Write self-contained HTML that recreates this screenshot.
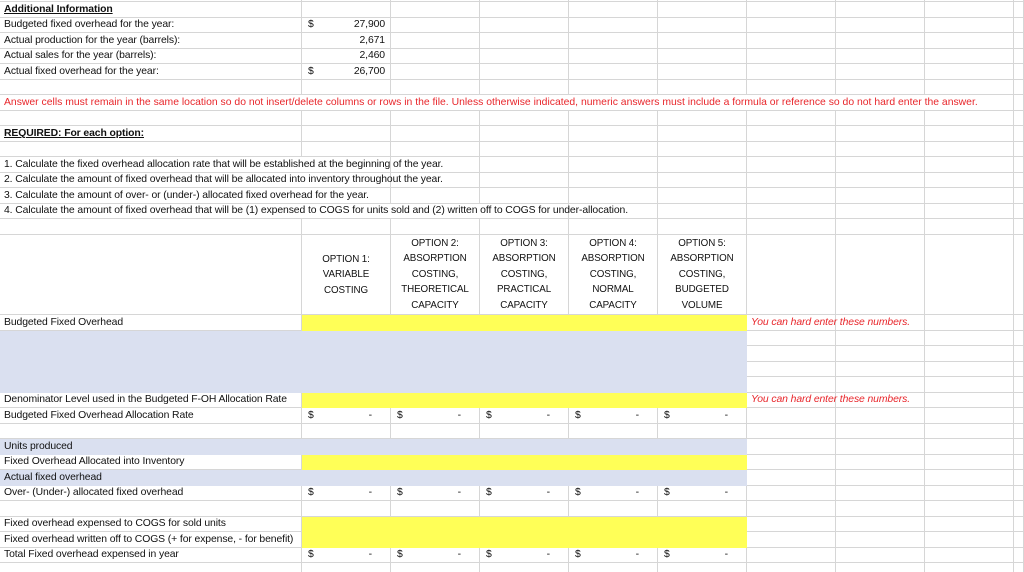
<!DOCTYPE html>
<html><head><meta charset="utf-8">
<style>
html,body{margin:0;padding:0;background:#fff;width:1024px;height:572px;overflow:hidden}
table{width:1024px;border-collapse:separate;border-spacing:0;table-layout:fixed;font-family:"Liberation Sans",Carlito,sans-serif;font-size:10.4px;color:#111;letter-spacing:-0.1px}
td{padding:0 0 1px 4px;border-right:1px solid #d6d6d6;border-bottom:1px solid #d6d6d6;white-space:nowrap;overflow:visible;vertical-align:bottom;box-sizing:border-box;line-height:12px}
.y{background:#ffff57;border-color:#ffff57}
.b{background:#dae0f0;border-color:#dae0f0}
.red{color:#e8262b}
.it{font-style:italic;color:#e8262b}
.bu{font-weight:bold;text-decoration:underline}
.r{text-align:right;padding-right:5px}
.d{position:relative}
.d span.s{position:absolute;left:6px;bottom:1px}
.d span.m{position:absolute;right:18px;bottom:1px}
.h{text-align:center;vertical-align:bottom;line-height:15.4px;padding:0 0 1px 0;white-space:nowrap;font-size:9.8px}
</style></head><body>
<table>
<colgroup><col style="width:302px"><col style="width:89px"><col style="width:89px"><col style="width:89px"><col style="width:89px"><col style="width:89px"><col style="width:89px"><col style="width:89px"><col style="width:89px"><col style="width:10px"></colgroup>
<tr style="height:2px"><td></td><td></td><td></td><td></td><td></td><td></td><td></td><td></td><td></td><td></td></tr>
<tr style="height:16px"><td class="bu">Additional Information</td><td></td><td></td><td></td><td></td><td></td><td></td><td></td><td></td><td></td></tr>
<tr style="height:15px"><td>Budgeted fixed overhead for the year:</td><td class="d"><span class="s">$</span><span class="m" style="right:5px">27,900</span></td><td></td><td></td><td></td><td></td><td></td><td></td><td></td><td></td></tr>
<tr style="height:16px"><td>Actual production for the year (barrels):</td><td class="r">2,671</td><td></td><td></td><td></td><td></td><td></td><td></td><td></td><td></td></tr>
<tr style="height:15px"><td>Actual sales for the year (barrels):</td><td class="r">2,460</td><td></td><td></td><td></td><td></td><td></td><td></td><td></td><td></td></tr>
<tr style="height:16px"><td>Actual fixed overhead for the year:</td><td class="d"><span class="s">$</span><span class="m" style="right:5px">26,700</span></td><td></td><td></td><td></td><td></td><td></td><td></td><td></td><td></td></tr>
<tr style="height:15px"><td></td><td></td><td></td><td></td><td></td><td></td><td></td><td></td><td></td><td></td></tr>
<tr style="height:16px"><td colspan="9" class="red" style="letter-spacing:0px">Answer cells must remain in the same location so do not insert/delete columns or rows in the file. Unless otherwise indicated, numeric answers must include a formula or reference so do not hard enter the answer.</td><td></td></tr>
<tr style="height:15px"><td></td><td></td><td></td><td></td><td></td><td></td><td></td><td></td><td></td><td></td></tr>
<tr style="height:16px"><td class="bu">REQUIRED: For each option:</td><td></td><td></td><td></td><td></td><td></td><td></td><td></td><td></td><td></td></tr>
<tr style="height:15px"><td></td><td></td><td></td><td></td><td></td><td></td><td></td><td></td><td></td><td></td></tr>
<tr style="height:16px"><td colspan="2">1. Calculate the fixed overhead allocation rate that will be established at the beginning of the year.</td><td></td><td></td><td></td><td></td><td></td><td></td><td></td><td></td></tr>
<tr style="height:15px"><td colspan="2">2. Calculate the amount of fixed overhead that will be allocated into inventory throughout the year.</td><td></td><td></td><td></td><td></td><td></td><td></td><td></td><td></td></tr>
<tr style="height:16px"><td colspan="2">3. Calculate the amount of over- or (under-) allocated fixed overhead for the year.</td><td></td><td></td><td></td><td></td><td></td><td></td><td></td><td></td></tr>
<tr style="height:15px"><td colspan="4">4. Calculate the amount of fixed overhead that will be (1) expensed to COGS for units sold and (2) written off to COGS for under-allocation.</td><td></td><td></td><td></td><td></td><td></td><td></td></tr>
<tr style="height:16px"><td></td><td></td><td></td><td></td><td></td><td></td><td></td><td></td><td></td><td></td></tr>
<tr style="height:80px"><td></td><td class="h" style="padding-bottom:16px">OPTION 1:<br>VARIABLE<br>COSTING</td><td class="h">OPTION 2:<br>ABSORPTION<br>COSTING,<br>THEORETICAL<br>CAPACITY</td><td class="h">OPTION 3:<br>ABSORPTION<br>COSTING,<br>PRACTICAL<br>CAPACITY</td><td class="h">OPTION 4:<br>ABSORPTION<br>COSTING,<br>NORMAL<br>CAPACITY</td><td class="h">OPTION 5:<br>ABSORPTION<br>COSTING,<br>BUDGETED<br>VOLUME</td><td></td><td></td><td></td><td></td></tr>
<tr style="height:16px"><td>Budgeted Fixed Overhead</td><td class="y"></td><td class="y"></td><td class="y"></td><td class="y"></td><td class="y"></td><td class="it">You can hard enter these numbers.</td><td></td><td></td><td></td></tr>
<tr style="height:15px"><td class="b"></td><td class="b"></td><td class="b"></td><td class="b"></td><td class="b"></td><td class="b"></td><td></td><td></td><td></td><td></td></tr>
<tr style="height:16px"><td class="b"></td><td class="b"></td><td class="b"></td><td class="b"></td><td class="b"></td><td class="b"></td><td></td><td></td><td></td><td></td></tr>
<tr style="height:15px"><td class="b"></td><td class="b"></td><td class="b"></td><td class="b"></td><td class="b"></td><td class="b"></td><td></td><td></td><td></td><td></td></tr>
<tr style="height:16px"><td class="b"></td><td class="b"></td><td class="b"></td><td class="b"></td><td class="b"></td><td class="b"></td><td></td><td></td><td></td><td></td></tr>
<tr style="height:15px"><td>Denominator Level used in the Budgeted F-OH Allocation Rate</td><td class="y"></td><td class="y"></td><td class="y"></td><td class="y"></td><td class="y"></td><td class="it">You can hard enter these numbers.</td><td></td><td></td><td></td></tr>
<tr style="height:16px"><td>Budgeted Fixed Overhead Allocation Rate</td><td class="d"><span class="s">$</span><span class="m">-</span></td><td class="d"><span class="s">$</span><span class="m">-</span></td><td class="d"><span class="s">$</span><span class="m">-</span></td><td class="d"><span class="s">$</span><span class="m">-</span></td><td class="d"><span class="s">$</span><span class="m">-</span></td><td></td><td></td><td></td><td></td></tr>
<tr style="height:15px"><td></td><td></td><td></td><td></td><td></td><td></td><td></td><td></td><td></td><td></td></tr>
<tr style="height:16px"><td class="b">Units produced</td><td class="b"></td><td class="b"></td><td class="b"></td><td class="b"></td><td class="b"></td><td></td><td></td><td></td><td></td></tr>
<tr style="height:15px"><td>Fixed Overhead Allocated into Inventory</td><td class="y"></td><td class="y"></td><td class="y"></td><td class="y"></td><td class="y"></td><td></td><td></td><td></td><td></td></tr>
<tr style="height:16px"><td class="b">Actual fixed overhead</td><td class="b"></td><td class="b"></td><td class="b"></td><td class="b"></td><td class="b"></td><td></td><td></td><td></td><td></td></tr>
<tr style="height:15px"><td>Over- (Under-) allocated fixed overhead</td><td class="d"><span class="s">$</span><span class="m">-</span></td><td class="d"><span class="s">$</span><span class="m">-</span></td><td class="d"><span class="s">$</span><span class="m">-</span></td><td class="d"><span class="s">$</span><span class="m">-</span></td><td class="d"><span class="s">$</span><span class="m">-</span></td><td></td><td></td><td></td><td></td></tr>
<tr style="height:16px"><td></td><td></td><td></td><td></td><td></td><td></td><td></td><td></td><td></td><td></td></tr>
<tr style="height:15px"><td>Fixed overhead expensed to COGS for sold units</td><td class="y"></td><td class="y"></td><td class="y"></td><td class="y"></td><td class="y"></td><td></td><td></td><td></td><td></td></tr>
<tr style="height:16px"><td>Fixed overhead written off to COGS (+ for expense, - for benefit)</td><td class="y"></td><td class="y"></td><td class="y"></td><td class="y"></td><td class="y"></td><td></td><td></td><td></td><td></td></tr>
<tr style="height:15px"><td>Total Fixed overhead expensed in year</td><td class="d"><span class="s">$</span><span class="m">-</span></td><td class="d"><span class="s">$</span><span class="m">-</span></td><td class="d"><span class="s">$</span><span class="m">-</span></td><td class="d"><span class="s">$</span><span class="m">-</span></td><td class="d"><span class="s">$</span><span class="m">-</span></td><td></td><td></td><td></td><td></td></tr>
<tr style="height:16px"><td></td><td></td><td></td><td></td><td></td><td></td><td></td><td></td><td></td><td></td></tr>
</table>
</body></html>
